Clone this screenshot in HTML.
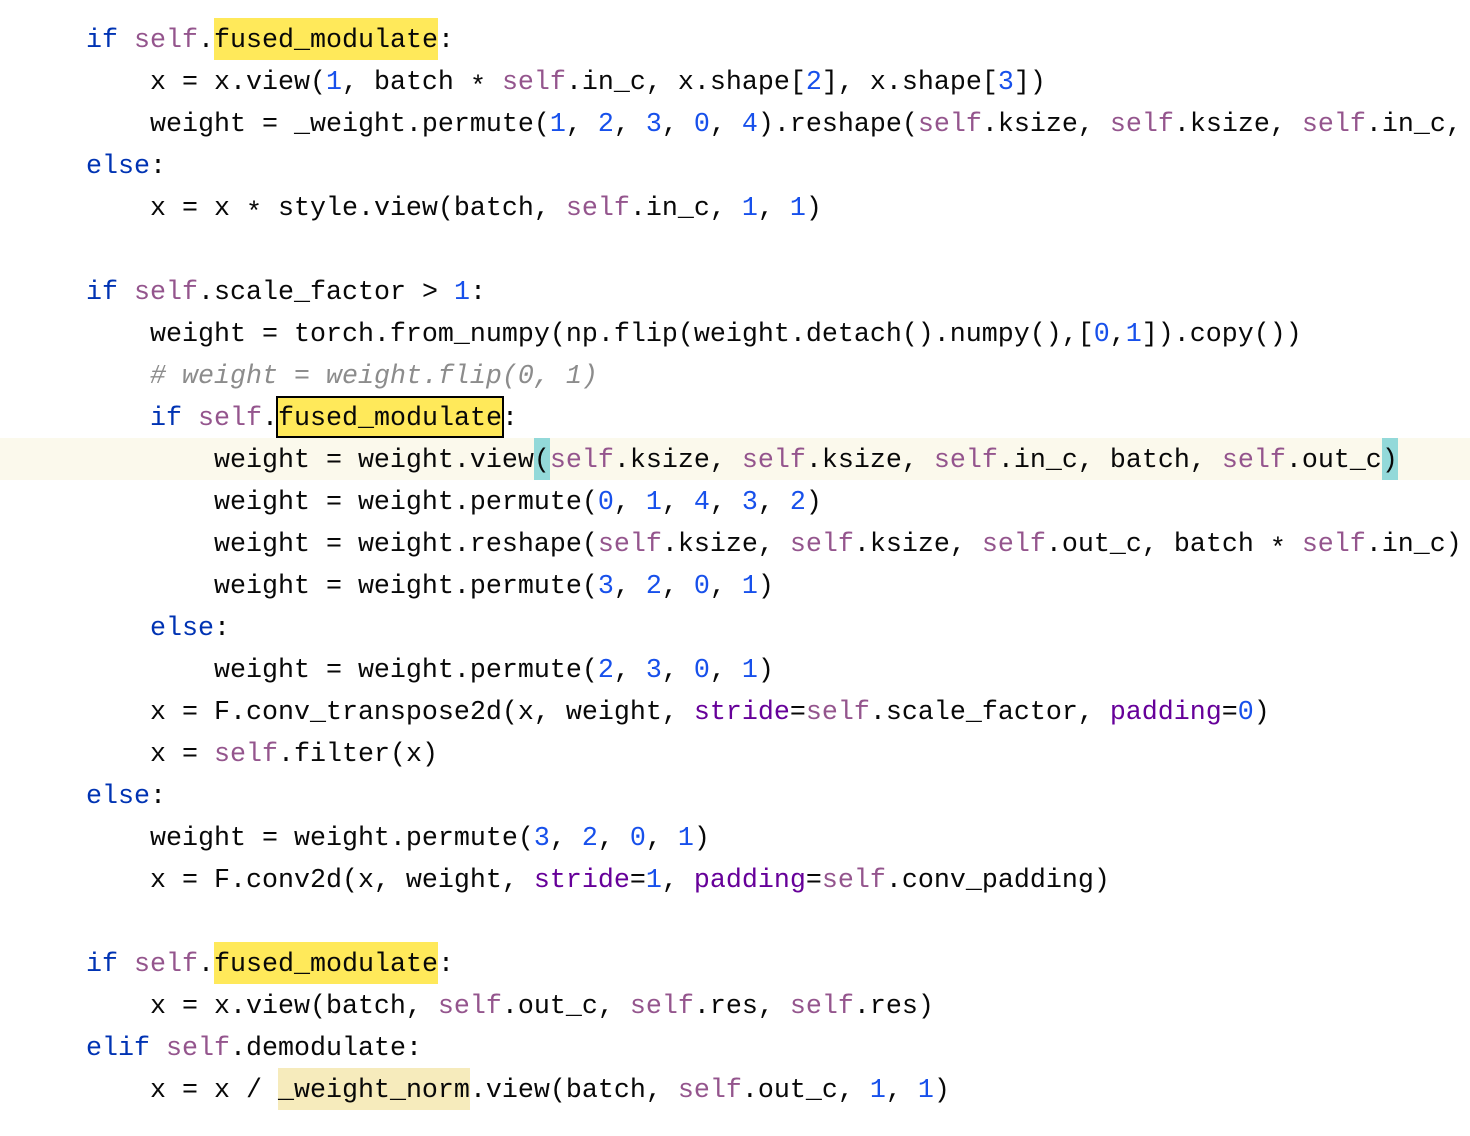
<!DOCTYPE html>
<html><head><meta charset="utf-8"><style>
html,body{margin:0;padding:0;background:#fff;width:1470px;height:1136px;overflow:hidden}
pre{margin:0;position:absolute;top:18px;left:0;width:1470px;font-family:"Liberation Mono",monospace;font-size:26.67px;line-height:46px;color:#080808;white-space:pre}
.l{display:block;height:42px;padding-left:86px;overflow:visible}
.cur{background:#fbf9ec}
.k{color:#0033b3}.s{color:#94558d}.n{color:#1750eb}.c{color:#8c8c8c;font-style:italic}.p{color:#660099}
.y,.yb,.m,.w{display:inline-block;height:42px;vertical-align:top;box-sizing:border-box}
.y{background:#ffe95a}
.yb{background:#ffe95a;border:2px solid #000;margin:0 -2px;padding:0 0px;line-height:42px}
.m{background:#93d9d9}
.w{background:#f6ebbc}
.a{position:relative;top:5px}
</style></head><body><pre><span class="l"><span class="k">if</span> <span class="s">self</span>.<span class="y">fused_modulate</span>:</span><span class="l">    x = x.view(<span class="n">1</span>, batch <span class="a">*</span> <span class="s">self</span>.in_c, x.shape[<span class="n">2</span>], x.shape[<span class="n">3</span>])</span><span class="l">    weight = _weight.permute(<span class="n">1</span>, <span class="n">2</span>, <span class="n">3</span>, <span class="n">0</span>, <span class="n">4</span>).reshape(<span class="s">self</span>.ksize, <span class="s">self</span>.ksize, <span class="s">self</span>.in_c, </span><span class="l"><span class="k">else</span>:</span><span class="l">    x = x <span class="a">*</span> style.view(batch, <span class="s">self</span>.in_c, <span class="n">1</span>, <span class="n">1</span>)</span><span class="l"> </span><span class="l"><span class="k">if</span> <span class="s">self</span>.scale_factor &gt; <span class="n">1</span>:</span><span class="l">    weight = torch.from_numpy(np.flip(weight.detach().numpy(),[<span class="n">0</span>,<span class="n">1</span>]).copy())</span><span class="l">    <span class="c"># weight = weight.flip(0, 1)</span></span><span class="l">    <span class="k">if</span> <span class="s">self</span>.<span class="yb">fused_modulate</span>:</span><span class="l cur">        weight = weight.view<span class="m">(</span><span class="s">self</span>.ksize, <span class="s">self</span>.ksize, <span class="s">self</span>.in_c, batch, <span class="s">self</span>.out_c<span class="m">)</span></span><span class="l">        weight = weight.permute(<span class="n">0</span>, <span class="n">1</span>, <span class="n">4</span>, <span class="n">3</span>, <span class="n">2</span>)</span><span class="l">        weight = weight.reshape(<span class="s">self</span>.ksize, <span class="s">self</span>.ksize, <span class="s">self</span>.out_c, batch <span class="a">*</span> <span class="s">self</span>.in_c)</span><span class="l">        weight = weight.permute(<span class="n">3</span>, <span class="n">2</span>, <span class="n">0</span>, <span class="n">1</span>)</span><span class="l">    <span class="k">else</span>:</span><span class="l">        weight = weight.permute(<span class="n">2</span>, <span class="n">3</span>, <span class="n">0</span>, <span class="n">1</span>)</span><span class="l">    x = F.conv_transpose2d(x, weight, <span class="p">stride</span>=<span class="s">self</span>.scale_factor, <span class="p">padding</span>=<span class="n">0</span>)</span><span class="l">    x = <span class="s">self</span>.filter(x)</span><span class="l"><span class="k">else</span>:</span><span class="l">    weight = weight.permute(<span class="n">3</span>, <span class="n">2</span>, <span class="n">0</span>, <span class="n">1</span>)</span><span class="l">    x = F.conv2d(x, weight, <span class="p">stride</span>=<span class="n">1</span>, <span class="p">padding</span>=<span class="s">self</span>.conv_padding)</span><span class="l"> </span><span class="l"><span class="k">if</span> <span class="s">self</span>.<span class="y">fused_modulate</span>:</span><span class="l">    x = x.view(batch, <span class="s">self</span>.out_c, <span class="s">self</span>.res, <span class="s">self</span>.res)</span><span class="l"><span class="k">elif</span> <span class="s">self</span>.demodulate:</span><span class="l">    x = x / <span class="w">_weight_norm</span>.view(batch, <span class="s">self</span>.out_c, <span class="n">1</span>, <span class="n">1</span>)</span></pre></body></html>
